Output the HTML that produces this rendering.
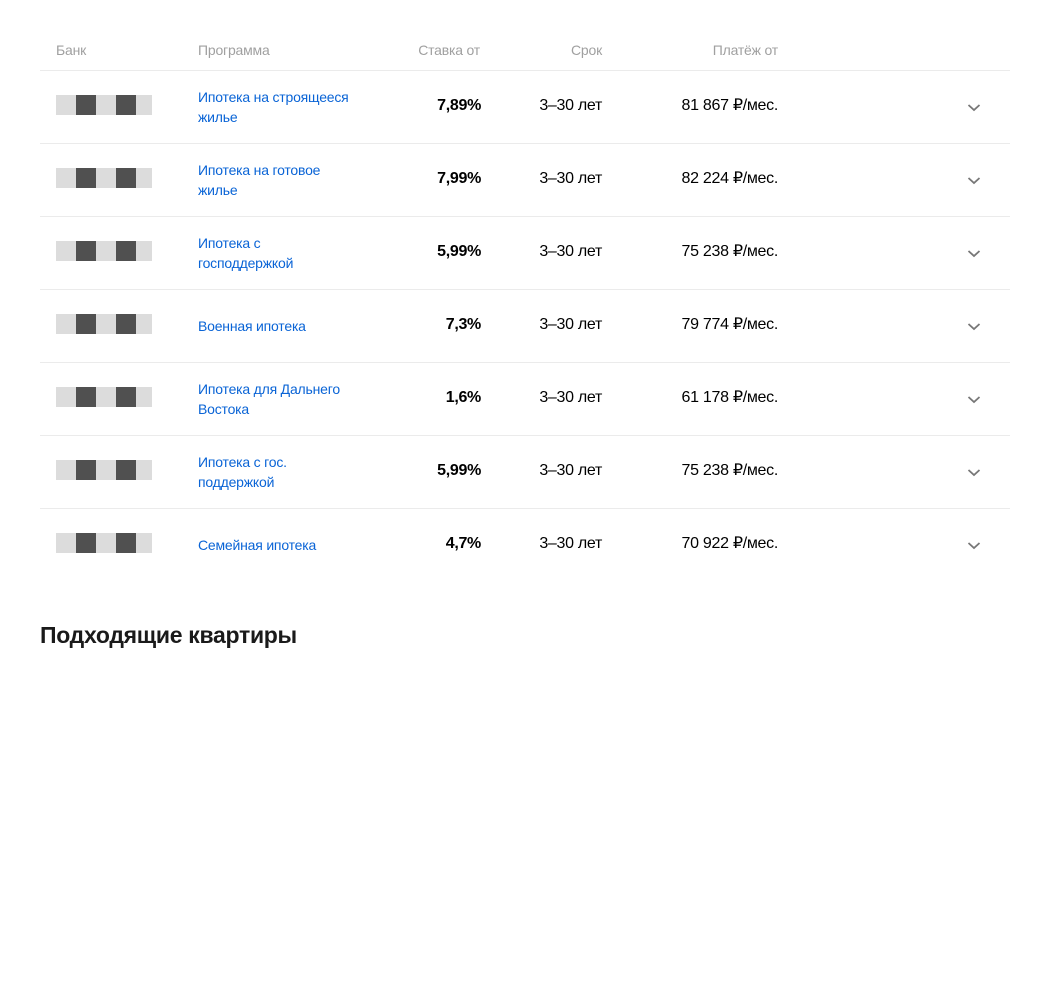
<!DOCTYPE html>
<html><head><meta charset="utf-8"><style>
*{margin:0;padding:0;box-sizing:border-box}
body{width:1050px;height:1000px;background:#fff;font-family:"Liberation Sans",Arial,sans-serif;position:relative;overflow:hidden}
.hd{position:absolute;top:41px;font-size:14px;color:#a0a0a0;line-height:18px;letter-spacing:-0.2px}
.line{position:absolute;left:40px;width:970px;height:1px;background:#ebebeb}
.row{position:absolute;left:0;width:1050px;height:73px}
.logo{position:absolute;left:56px;top:25px;width:96px;height:20px;background:#dcdcdc}
.logo i{position:absolute;top:0;width:20px;height:20px;background:#505050}
.prog{position:absolute;left:198px;width:165px;font-size:14px;line-height:20px;color:#0a64d6;letter-spacing:-0.2px}
.rate,.term,.pay{position:absolute;top:26px;font-size:16px;line-height:20px;height:20px;color:#000;letter-spacing:-0.3px;white-space:nowrap}
.rate{right:569px;font-weight:bold}
.term{right:448px}
.pay{right:272px}
.chev{position:absolute;left:967px;top:33px}
h2{position:absolute;left:40px;top:622px;font-size:23px;font-weight:bold;color:#1a1a1a;letter-spacing:-0.3px}
</style></head><body>
<div class="hd" style="left:56px">Банк</div>
<div class="hd" style="left:198px">Программа</div>
<div class="hd" style="right:570px">Ставка от</div>
<div class="hd" style="right:448px">Срок</div>
<div class="hd" style="right:272px">Платёж от</div>
<div class="line" style="top:70px"></div>

<div class="row" style="top:70px"><div class="logo"><i style="left:20px"></i><i style="left:60px"></i></div><div class="prog" style="top:17px">Ипотека на строящееся жилье</div><div class="rate">7,89%</div><div class="term">3–30 лет</div><div class="pay">81 867 ₽/мес.</div><svg class="chev" width="14" height="9" viewBox="0 0 14 9"><path d="M1.5 2l5.5 5 5.5-5" fill="none" stroke="#777" stroke-width="1.8"/></svg></div>
<div class="line" style="top:143px"></div>
<div class="row" style="top:143px"><div class="logo"><i style="left:20px"></i><i style="left:60px"></i></div><div class="prog" style="top:17px">Ипотека на готовое<br>жилье</div><div class="rate">7,99%</div><div class="term">3–30 лет</div><div class="pay">82 224 ₽/мес.</div><svg class="chev" width="14" height="9" viewBox="0 0 14 9"><path d="M1.5 2l5.5 5 5.5-5" fill="none" stroke="#777" stroke-width="1.8"/></svg></div>
<div class="line" style="top:216px"></div>
<div class="row" style="top:216px"><div class="logo"><i style="left:20px"></i><i style="left:60px"></i></div><div class="prog" style="top:17px">Ипотека с<br>господдержкой</div><div class="rate">5,99%</div><div class="term">3–30 лет</div><div class="pay">75 238 ₽/мес.</div><svg class="chev" width="14" height="9" viewBox="0 0 14 9"><path d="M1.5 2l5.5 5 5.5-5" fill="none" stroke="#777" stroke-width="1.8"/></svg></div>
<div class="line" style="top:289px"></div>
<div class="row" style="top:289px"><div class="logo"><i style="left:20px"></i><i style="left:60px"></i></div><div class="prog" style="top:27px">Военная ипотека</div><div class="rate">7,3%</div><div class="term">3–30 лет</div><div class="pay">79 774 ₽/мес.</div><svg class="chev" width="14" height="9" viewBox="0 0 14 9"><path d="M1.5 2l5.5 5 5.5-5" fill="none" stroke="#777" stroke-width="1.8"/></svg></div>
<div class="line" style="top:362px"></div>
<div class="row" style="top:362px"><div class="logo"><i style="left:20px"></i><i style="left:60px"></i></div><div class="prog" style="top:17px">Ипотека для Дальнего<br>Востока</div><div class="rate">1,6%</div><div class="term">3–30 лет</div><div class="pay">61 178 ₽/мес.</div><svg class="chev" width="14" height="9" viewBox="0 0 14 9"><path d="M1.5 2l5.5 5 5.5-5" fill="none" stroke="#777" stroke-width="1.8"/></svg></div>
<div class="line" style="top:435px"></div>
<div class="row" style="top:435px"><div class="logo"><i style="left:20px"></i><i style="left:60px"></i></div><div class="prog" style="top:17px">Ипотека с гос.<br>поддержкой</div><div class="rate">5,99%</div><div class="term">3–30 лет</div><div class="pay">75 238 ₽/мес.</div><svg class="chev" width="14" height="9" viewBox="0 0 14 9"><path d="M1.5 2l5.5 5 5.5-5" fill="none" stroke="#777" stroke-width="1.8"/></svg></div>
<div class="line" style="top:508px"></div>
<div class="row" style="top:508px"><div class="logo"><i style="left:20px"></i><i style="left:60px"></i></div><div class="prog" style="top:27px">Семейная ипотека</div><div class="rate">4,7%</div><div class="term">3–30 лет</div><div class="pay">70 922 ₽/мес.</div><svg class="chev" width="14" height="9" viewBox="0 0 14 9"><path d="M1.5 2l5.5 5 5.5-5" fill="none" stroke="#777" stroke-width="1.8"/></svg></div>

<h2>Подходящие квартиры</h2>
</body></html>
